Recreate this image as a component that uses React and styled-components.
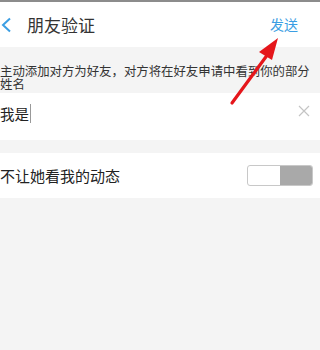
import React from "react";
import styled, { createGlobalStyle } from "styled-components";

const Global = createGlobalStyle`
  html, body { margin: 0; padding: 0; }
  body {
    background: #f4f4f4;
    font-family: "Noto Sans CJK SC", "Noto Sans", sans-serif;
    width: 320px;
    height: 350px;
    overflow: hidden;
  }
`;

const Screen = styled.div`
  position: relative;
  width: 320px;
  height: 350px;
  background: #f4f4f4;
  border-top: 2px solid #8c8c8c;
  box-sizing: border-box;
  display: flex;
  flex-direction: column;
`;

const Header = styled.header`
  height: 45px;
  background: #fff;
  display: flex;
  align-items: center;
  padding: 0 22px 0 1px;
  flex-shrink: 0;
`;

const Back = styled.span`
  display: flex;
  width: 26px;
`;

const Title = styled.h1`
  margin: 0;
  flex: 1;
  font-size: 17px;
  font-weight: 400;
  color: #333;
  letter-spacing: 0;
`;

const Send = styled.span`
  font-size: 14px;
  color: #3b9ee3;
  margin-top: -2px;
`;

const Hint = styled.div`
  font-size: 12.4px;
  line-height: 13px;
  color: #333;
  padding: 18px 4px 1px 0;
  height: 46px;
  box-sizing: border-box;
  white-space: pre-line;
`;

const Row = styled.div`
  background: #fff;
  height: ${(p) => p.$h}px;
  display: flex;
  align-items: center;
  justify-content: space-between;
  padding: 0 8px 0 0;
  margin-bottom: ${(p) => p.$mb || 0}px;
  box-sizing: border-box;
  flex-shrink: 0;
`;

const InputText = styled.span`
  font-size: 14.5px;
  color: #222;
  display: flex;
  align-items: center;
  margin-top: -6px;
`;

const Caret = styled.span`
  display: inline-block;
  width: 1px;
  height: 19px;
  background: #999;
  margin-left: 1px;
`;

const Clear = styled.span`
  display: flex;
  margin-right: 2px;
  margin-top: -11px;
`;

const Label = styled.span`
  font-size: 15px;
  color: #222;
`;

const Toggle = styled.div`
  width: 66px;
  height: 21px;
  box-sizing: border-box;
  border: 1px solid #c8c8c8;
  border-radius: 3px;
  background: #fff;
  display: flex;
  justify-content: flex-end;
  overflow: hidden;
  margin-right: -1px;
`;

const Knob = styled.div`
  width: 32px;
  height: 100%;
  background: #a9a9a9;
`;

const Arrow = styled.svg`
  position: absolute;
  left: 0;
  top: 0;
  pointer-events: none;
`;

export default function App() {
  return (
    <>
      <Global />
      <Screen>
        <Header>
          <Back>
            <svg width="12" height="16" viewBox="0 0 12 16">
              <path d="M9 1.5 L2 8 L9 14.5" fill="none" stroke="#3b9ee3" strokeWidth="2" />
            </svg>
          </Back>
          <Title>朋友验证</Title>
          <Send>发送</Send>
        </Header>
        <Hint>{"主动添加对方为好友，对方将在好友申请中看到你的部分\n姓名"}</Hint>
        <Row $h={47} $mb={13}>
          <InputText>
            我是
            <Caret />
          </InputText>
          <Clear>
            <svg width="12" height="12" viewBox="0 0 12 12">
              <path d="M1 1 L11 11 M11 1 L1 11" stroke="#c4c4c4" strokeWidth="1.2" />
            </svg>
          </Clear>
        </Row>
        <Row $h={45}>
          <Label>不让她看我的动态</Label>
          <Toggle>
            <Knob />
          </Toggle>
        </Row>
        <Arrow width="320" height="350" viewBox="0 0 320 350">
          <line x1="232" y1="101" x2="268" y2="52" stroke="#e5161b" strokeWidth="3.2" strokeLinecap="round" />
          <polygon points="278,36 259,50 272,58" fill="#e5161b" />
        </Arrow>
      </Screen>
    </>
  );
}
